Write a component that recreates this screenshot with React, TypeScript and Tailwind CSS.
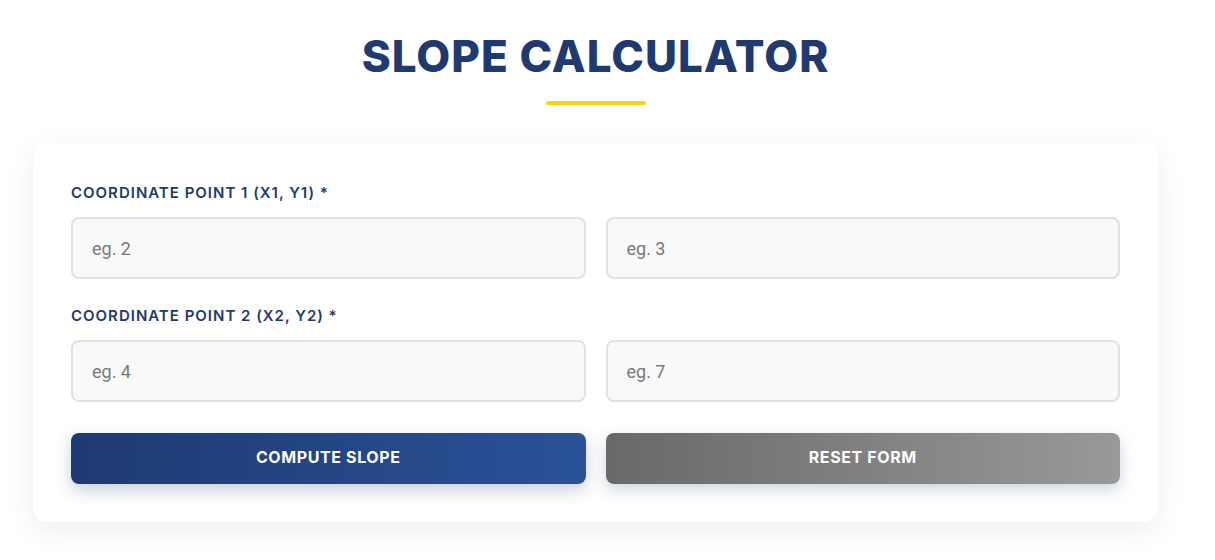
import React from 'react';

function Field({ ph }: { ph: string }) {
  return (
    <input
      placeholder={ph}
      className="h-[62px] w-full rounded-lg border-2 border-[#e1e1e1] bg-[#f9f9f9] px-[19px] text-[18px] text-[#333] outline-none placeholder:text-[#7a7a7a] [font-family:Roboto,'Liberation_Sans',sans-serif]"
    />
  );
}

function Label({ children }: { children: React.ReactNode }) {
  return (
    <div className="mb-[14px] text-[15px] font-semibold uppercase leading-[20px] tracking-[1px] text-[#1e3a6e]">
      {children}
    </div>
  );
}

export default function App() {
  return (
    <div className="min-h-[560px] bg-white [font-family:Inter,'Noto_Sans',sans-serif]">
      <div className="w-[1191px] pt-[28px]">
        <div className="flex flex-col items-center">
          <h1 className="text-[44px] font-extrabold leading-[56px] tracking-[1px] text-[#1f3a6f]">SLOPE CALCULATOR</h1>
          <div className="mt-[17px] h-[4px] w-[100px] rounded-full bg-[#fcd512]" />
        </div>

        <div className="mx-[33px] mt-[38px] rounded-[14px] bg-white px-[38px] pb-[38px] pt-[40px] shadow-[0_8px_30px_rgba(0,0,0,0.07)]">
          <Label>Coordinate Point 1 (X1, Y1) *</Label>
          <div className="grid grid-cols-2 gap-[20px]">
            <Field ph="eg. 2" />
            <Field ph="eg. 3" />
          </div>

          <div className="mt-[27px]">
            <Label>Coordinate Point 2 (X2, Y2) *</Label>
          </div>
          <div className="grid grid-cols-2 gap-[20px]">
            <Field ph="eg. 4" />
            <Field ph="eg. 7" />
          </div>

          <div className="mt-[31px] grid grid-cols-2 gap-[20px]">
            <button className="h-[51px] rounded-lg bg-gradient-to-r from-[#1e3a72] to-[#2a5298] pb-[3px] text-[16px] font-bold uppercase tracking-[0.6px] text-white shadow-[0_6px_16px_rgba(30,60,114,0.25)]">
              Compute Slope
            </button>
            <button className="h-[51px] rounded-lg bg-gradient-to-r from-[#696969] to-[#999999] pb-[3px] text-[16px] font-bold uppercase tracking-[0.6px] text-white shadow-[0_6px_16px_rgba(30,60,114,0.22)]">
              Reset Form
            </button>
          </div>
        </div>
      </div>
    </div>
  );
}
